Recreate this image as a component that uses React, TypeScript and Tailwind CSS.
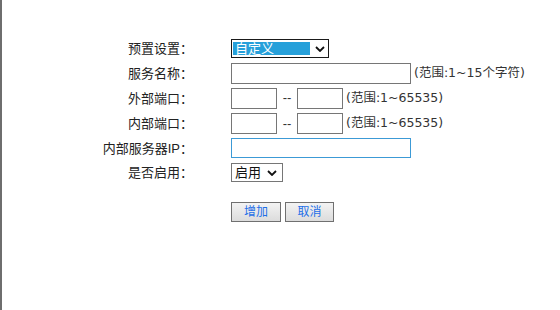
import React from 'react';

const font = { fontFamily: '"Liberation Sans", "Noto Sans CJK SC", sans-serif' };
const hintFont = { fontFamily: '"DejaVu Sans", "Noto Sans CJK SC", sans-serif' };

const Chevron: React.FC<{ className?: string }> = ({ className }) => (
  <svg className={className} width="10" height="6" viewBox="0 0 10 6" fill="none">
    <path d="M1 1l4 4 4-4" stroke="#111" strokeWidth="1.8" />
  </svg>
);

const Row: React.FC<{ label: string; h: string; children: React.ReactNode }> = ({ label, h, children }) => (
  <div className={`flex items-center ${h}`}>
    <div className="w-[191px] shrink-0 text-right text-[13px] text-[#222] leading-none">{label}</div>
    <div className="ml-[38px] flex items-center">{children}</div>
  </div>
);

const Hint: React.FC<{ children: React.ReactNode }> = ({ children }) => (
  <span className="ml-[3px] text-[12.5px] text-[#333]" style={hintFont}>{children}</span>
);

const PortRange: React.FC = () => (
  <>
    <input className="w-[46px] h-[21px] border border-[#767676] bg-white outline-none" />
    <span className="w-[20px] text-center text-[13px] text-[#333]">--</span>
    <input className="w-[46px] h-[21px] border border-[#767676] bg-white outline-none" />
    <Hint>(范围:1~65535)</Hint>
  </>
);

export default function App() {
  return (
    <div className="w-[560px] h-[310px] bg-white border-l-2 border-[#6e6e6e]" style={font}>
      <div className="pt-[36px]">
        <Row label="预置设置：" h="h-[25px]">
          <div className="w-[98px] h-[19px] border border-[#1a1a1a] bg-white flex items-center pl-[1px]">
            <div className="w-[77px] h-[13px] bg-[#26a0da] text-white text-[13px] leading-[13px] pl-[2px]">自定义</div>
            <Chevron className="ml-[5px]" />
          </div>
        </Row>
        <Row label="服务名称：" h="h-[24px]">
          <input className="w-[180px] h-[21px] border border-[#767676] bg-white outline-none" />
          <Hint>(范围:1~15个字符)</Hint>
        </Row>
        <Row label="外部端口：" h="h-[26px]">
          <PortRange />
        </Row>
        <Row label="内部端口：" h="h-[25px]">
          <PortRange />
        </Row>
        <Row label="内部服务器IP：" h="h-[24px]">
          <input className="w-[180px] h-[20px] border border-[#3c9ad6] bg-white outline-none" />
        </Row>
        <Row label="是否启用：" h="h-[25px]">
          <div className="w-[52px] h-[19px] border border-[#767676] bg-white flex items-center pl-[3px]">
            <span className="text-[13px] text-[#111] leading-none">启用</span>
            <Chevron className="ml-[6px]" />
          </div>
        </Row>
        <div className="flex mt-[17px] ml-[229px] gap-[4px]">
          <button className="w-[50px] h-[20px] border border-[#707070] bg-gradient-to-b from-[#f3f3f3] to-[#dcdcdc] text-[12px] text-[#1e6fe8] leading-none">增加</button>
          <button className="w-[49px] h-[20px] border border-[#707070] bg-gradient-to-b from-[#f3f3f3] to-[#dcdcdc] text-[12px] text-[#1e6fe8] leading-none">取消</button>
        </div>
      </div>
    </div>
  );
}
